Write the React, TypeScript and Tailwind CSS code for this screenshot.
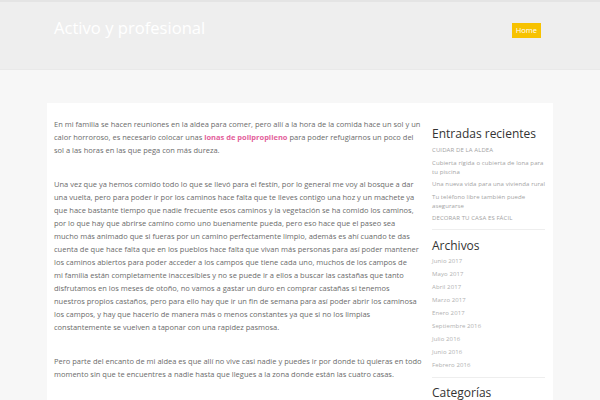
const recientes = [
  "CUIDAR DE LA ALDEA",
  "Cubierta rígida o cubierta de lona para tu piscina",
  "Una nueva vida para una vivienda rural",
  "Tu teléfono libre también puede asegurarse",
  "DECORAR TU CASA ES FÁCIL",
];

const archivos = [
  "Junio 2017",
  "Mayo 2017",
  "Abril 2017",
  "Marzo 2017",
  "Enero 2017",
  "Septiembre 2016",
  "Julio 2016",
  "Junio 2016",
  "Febrero 2016",
];

// line breaks as they fall in the original layout
const parrafo2 = [
  "Una vez que ya hemos comido todo lo que se llevó para el festín, por lo general me voy al bosque a dar",
  "una vuelta, pero para poder ir por los caminos hace falta que te lleves contigo una hoz y un machete ya",
  "que hace bastante tiempo que nadie frecuente esos caminos y la vegetación se ha comido los caminos,",
  "por lo que hay que abrirse camino como uno buenamente pueda, pero eso hace que el paseo sea",
  "mucho más animado que si fueras por un camino perfectamente limpio, además es ahí cuando te das",
  "cuenta de que hace falta que en los pueblos hace falta que vivan más personas para así poder mantener",
  "los caminos abiertos para poder acceder a los campos que tiene cada uno, muchos de los campos de",
  "mi familia están completamente inaccesibles y no se puede ir a ellos a buscar las castañas que tanto",
  "disfrutamos en los meses de otoño, no vamos a gastar un duro en comprar castañas si tenemos",
  "nuestros propios castaños, pero para ello hay que ir un fin de semana para así poder abrir los caminosa",
  "los campos, y hay que hacerlo de manera más o menos constantes ya que si no los limpias",
  "constantemente se vuelven a taponar con una rapidez pasmosa.",
];

const parrafo3 = [
  "Pero parte del encanto de mi aldea es que allí no vive casi nadie y puedes ir por donde tú quieras en todo",
  "momento sin que te encuentres a nadie hasta que llegues a la zona donde están las cuatro casas.",
];

export default function App() {
  return (
    <div className="min-h-screen bg-[#f7f7f7] font-['Open_Sans',sans-serif]">
      {/* Header */}
      <header className="h-[70px] bg-[#eeeeee] border-t-2 border-[#e4e4e4] border-b border-b-[#e9e9e9] flex items-start justify-between pl-[54px] pr-[59px]">
        <h1 className="mt-[14px] text-[16.6px] leading-[24px] text-white font-normal">
          Activo y profesional
        </h1>
        <a className="mt-[21px] bg-[#f7c200] text-white text-[7.5px] leading-[15px] px-[4px]">
          Home
        </a>
      </header>

      {/* Content */}
      <div className="px-[47px] pt-[33px]">
        <div className="bg-white flex pl-[7px] pr-[5px] pt-[15px] pb-8">
          <article className="w-[357px] shrink-0 text-[7.5px] leading-[13px] text-[#6b6b6b] whitespace-nowrap">
            <p className="mb-[21px]">
              <span className="block">
                En mi familia se hacen reuniones en la aldea para comer, pero allí a la hora de la comida hace un sol y un
              </span>
              <span className="block">
                calor horroroso, es necesario colocar unas{" "}
                <a className="text-[#e3619b] font-bold">lonas de polipropileno</a> para poder refugiarnos un poco del
              </span>
              <span className="block">sol a las horas en las que pega con más dureza.</span>
            </p>
            <p className="mb-[21px]">
              {parrafo2.map((l) => (
                <span key={l} className="block">
                  {l}
                </span>
              ))}
            </p>
            <p>
              {parrafo3.map((l) => (
                <span key={l} className="block">
                  {l}
                </span>
              ))}
            </p>
          </article>

          <aside className="ml-[21px] w-[116px] shrink-0">
            <h2 className="mt-[8px] text-[12px] leading-[16px] text-[#333333]">Entradas recientes</h2>
            <ul className="mt-[4px] text-[6px] leading-[9px] tracking-[0.1px] text-[#a3a3a3]">
              {recientes.map((t) => (
                <li key={t} className="mb-[3.5px]">
                  {t}
                </li>
              ))}
            </ul>
            <div className="mt-[6px] border-t border-[#eeeeee] w-[113px]" />
            <h2 className="mt-[8px] text-[12px] leading-[16px] text-[#333333]">Archivos</h2>
            <ul className="mt-[1px] text-[6px] leading-[13px] tracking-[0.1px] text-[#b0b0b0]">
              {archivos.map((t) => (
                <li key={t}>{t}</li>
              ))}
            </ul>
            <div className="mt-[5px] border-t border-[#eeeeee] w-[113px]" />
            <h2 className="mt-[7px] text-[12px] leading-[16px] text-[#333333]">Categorías</h2>
          </aside>
        </div>
      </div>
    </div>
  );
}
